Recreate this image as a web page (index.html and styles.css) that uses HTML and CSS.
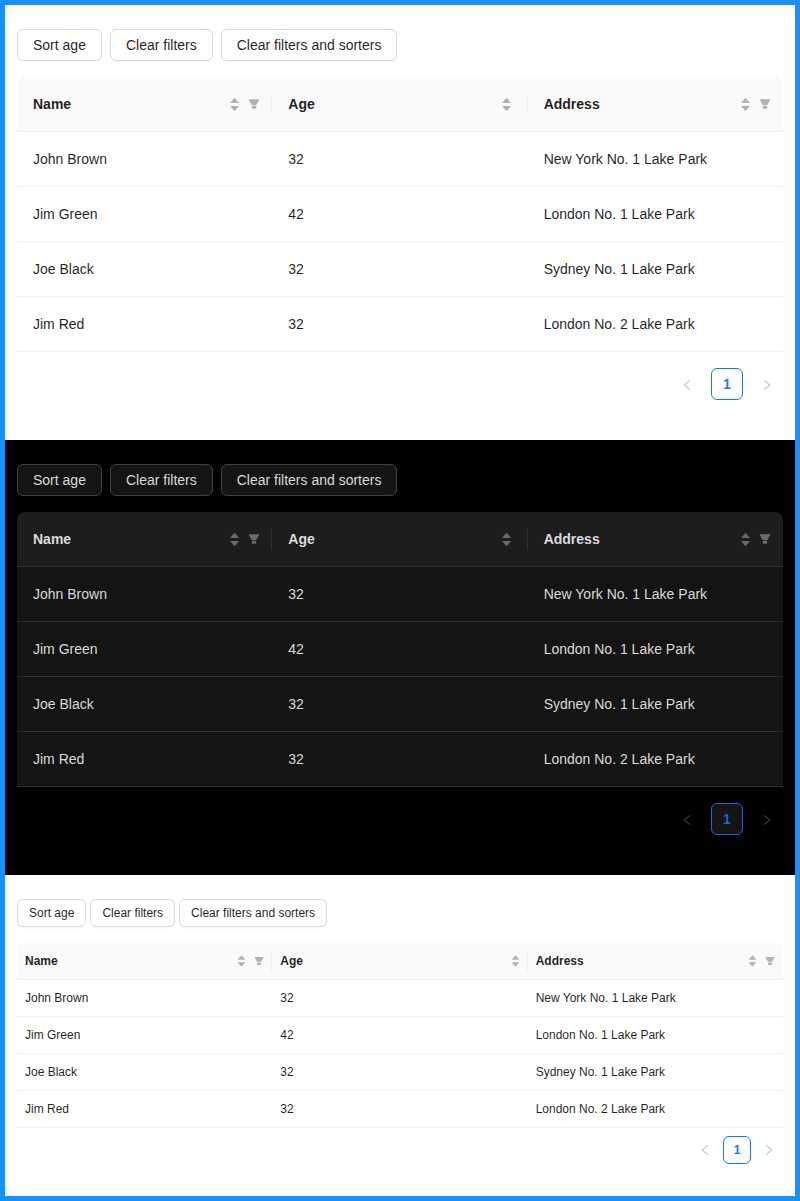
FILE: index.html
```html
<!DOCTYPE html>
<html lang="en">
<head>
    <meta charset="UTF-8">
    <meta name="viewport" content="width=device-width, initial-scale=1.0">
    <title>Table filters and sorters</title>
    <link rel="stylesheet" href="styles.css">
</head>
<body>
    <svg class="icon-defs" aria-hidden="true">
        <symbol id="caret-up" viewBox="64 64 896 896"><path d="M858.9 689L530.5 308.2c-9.4-10.9-27.5-10.9-37 0L165.1 689c-12.2 14.2-1.2 35 18.5 35h656.8c19.7 0 30.7-20.8 18.5-35z"/></symbol>
        <symbol id="caret-down" viewBox="64 64 896 896"><path d="M840.4 300H183.6c-19.7 0-30.7 20.8-18.5 35l328.4 380.8c9.4 10.9 27.5 10.9 37 0L858.9 335c12.2-14.2 1.2-35-18.5-35z"/></symbol>
        <symbol id="filter" viewBox="64 64 896 896"><path d="M349 838c0 17.7 14.2 32 31.7 32h262.6c17.5 0 31.7-14.3 31.7-32V642H349v196zm531.1-684H143.9c-24.5 0-39.8 26.7-27.5 48l221.3 376h348.8l221.3-376c12.1-21.3-3.2-48-27.7-48z"/></symbol>
        <symbol id="left" viewBox="64 64 896 896"><path d="M724 218.3V141c0-6.7-7.7-10.4-12.9-6.3L260.3 486.8a31.86 31.86 0 0 0 0 50.3l450.8 352.1c5.3 4.1 12.9.4 12.9-6.3v-77.3c0-4.9-2.3-9.6-6.1-12.6l-360-281 360-281.1c3.8-3 6.1-7.7 6.1-12.6z"/></symbol>
        <symbol id="right" viewBox="64 64 896 896"><path d="M765.7 486.8L314.9 134.7A7.97 7.97 0 0 0 302 141v77.3c0 4.9 2.3 9.6 6.1 12.6l360 281.1-360 281.1c-3.9 3-6.1 7.7-6.1 12.6V883c0 6.7 7.7 10.4 12.9 6.3l450.8-352.1a31.96 31.96 0 0 0 0-50.4z"/></symbol>
    </svg>

    <div class="frame">
        <!-- default, light -->
        <section class="demo">
            <div class="actions">
                <button class="btn">Sort age</button>
                <button class="btn">Clear filters</button>
                <button class="btn">Clear filters and sorters</button>
            </div>
            <table class="data-table">
                <thead>
                    <tr>
                        <th>
                            <div class="th-inner">
                                <span class="th-title">Name</span>
                                <span class="sorter"><svg><use href="#caret-up"/></svg><svg><use href="#caret-down"/></svg></span>
                                <span class="filter-trigger"><svg><use href="#filter"/></svg></span>
                            </div>
                        </th>
                        <th>
                            <div class="th-inner">
                                <span class="th-title">Age</span>
                                <span class="sorter"><svg><use href="#caret-up"/></svg><svg><use href="#caret-down"/></svg></span>
                            </div>
                        </th>
                        <th>
                            <div class="th-inner">
                                <span class="th-title">Address</span>
                                <span class="sorter"><svg><use href="#caret-up"/></svg><svg><use href="#caret-down"/></svg></span>
                                <span class="filter-trigger"><svg><use href="#filter"/></svg></span>
                            </div>
                        </th>
                    </tr>
                </thead>
                <tbody>
                    <tr><td>John Brown</td><td>32</td><td>New York No. 1 Lake Park</td></tr>
                    <tr><td>Jim Green</td><td>42</td><td>London No. 1 Lake Park</td></tr>
                    <tr><td>Joe Black</td><td>32</td><td>Sydney No. 1 Lake Park</td></tr>
                    <tr><td>Jim Red</td><td>32</td><td>London No. 2 Lake Park</td></tr>
                </tbody>
            </table>
            <ul class="pagination">
                <li class="page-arrow"><svg><use href="#left"/></svg></li>
                <li class="page-item">1</li>
                <li class="page-arrow"><svg><use href="#right"/></svg></li>
            </ul>
        </section>

        <!-- dark -->
        <section class="demo dark">
            <div class="actions">
                <button class="btn">Sort age</button>
                <button class="btn">Clear filters</button>
                <button class="btn">Clear filters and sorters</button>
            </div>
            <table class="data-table">
                <thead>
                    <tr>
                        <th>
                            <div class="th-inner">
                                <span class="th-title">Name</span>
                                <span class="sorter"><svg><use href="#caret-up"/></svg><svg><use href="#caret-down"/></svg></span>
                                <span class="filter-trigger"><svg><use href="#filter"/></svg></span>
                            </div>
                        </th>
                        <th>
                            <div class="th-inner">
                                <span class="th-title">Age</span>
                                <span class="sorter"><svg><use href="#caret-up"/></svg><svg><use href="#caret-down"/></svg></span>
                            </div>
                        </th>
                        <th>
                            <div class="th-inner">
                                <span class="th-title">Address</span>
                                <span class="sorter"><svg><use href="#caret-up"/></svg><svg><use href="#caret-down"/></svg></span>
                                <span class="filter-trigger"><svg><use href="#filter"/></svg></span>
                            </div>
                        </th>
                    </tr>
                </thead>
                <tbody>
                    <tr><td>John Brown</td><td>32</td><td>New York No. 1 Lake Park</td></tr>
                    <tr><td>Jim Green</td><td>42</td><td>London No. 1 Lake Park</td></tr>
                    <tr><td>Joe Black</td><td>32</td><td>Sydney No. 1 Lake Park</td></tr>
                    <tr><td>Jim Red</td><td>32</td><td>London No. 2 Lake Park</td></tr>
                </tbody>
            </table>
            <ul class="pagination">
                <li class="page-arrow"><svg><use href="#left"/></svg></li>
                <li class="page-item">1</li>
                <li class="page-arrow"><svg><use href="#right"/></svg></li>
            </ul>
        </section>

        <!-- compact -->
        <section class="demo small">
            <div class="actions">
                <button class="btn">Sort age</button>
                <button class="btn">Clear filters</button>
                <button class="btn">Clear filters and sorters</button>
            </div>
            <table class="data-table">
                <thead>
                    <tr>
                        <th>
                            <div class="th-inner">
                                <span class="th-title">Name</span>
                                <span class="sorter"><svg><use href="#caret-up"/></svg><svg><use href="#caret-down"/></svg></span>
                                <span class="filter-trigger"><svg><use href="#filter"/></svg></span>
                            </div>
                        </th>
                        <th>
                            <div class="th-inner">
                                <span class="th-title">Age</span>
                                <span class="sorter"><svg><use href="#caret-up"/></svg><svg><use href="#caret-down"/></svg></span>
                            </div>
                        </th>
                        <th>
                            <div class="th-inner">
                                <span class="th-title">Address</span>
                                <span class="sorter"><svg><use href="#caret-up"/></svg><svg><use href="#caret-down"/></svg></span>
                                <span class="filter-trigger"><svg><use href="#filter"/></svg></span>
                            </div>
                        </th>
                    </tr>
                </thead>
                <tbody>
                    <tr><td>John Brown</td><td>32</td><td>New York No. 1 Lake Park</td></tr>
                    <tr><td>Jim Green</td><td>42</td><td>London No. 1 Lake Park</td></tr>
                    <tr><td>Joe Black</td><td>32</td><td>Sydney No. 1 Lake Park</td></tr>
                    <tr><td>Jim Red</td><td>32</td><td>London No. 2 Lake Park</td></tr>
                </tbody>
            </table>
            <ul class="pagination">
                <li class="page-arrow"><svg><use href="#left"/></svg></li>
                <li class="page-item">1</li>
                <li class="page-arrow"><svg><use href="#right"/></svg></li>
            </ul>
        </section>
    </div>
</body>
</html>
```

FILE: styles.css
```css
* {
    box-sizing: border-box;
}
body {
    margin: 0;
    font-family: "Liberation Sans", Arial, sans-serif;
    font-size: 14px;
    line-height: 22px;
    color: rgba(0, 0, 0, 0.88);
}
.icon-defs {
    display: none;
}
.frame {
    border: 5px solid #1890ff;
    background: #fff;
}

/* one demo block */
.demo {
    padding: 24px 12px;
}
.actions {
    display: flex;
    gap: 8px;
    margin-bottom: 16px;
}
.btn {
    height: 32px;
    padding: 0 15px;
    border: 1px solid #d9d9d9;
    border-radius: 6px;
    background: #fff;
    box-shadow: 0 2px 0 rgba(0, 0, 0, 0.02);
    color: inherit;
    font: inherit;
}

/* table */
.data-table {
    width: 100%;
    table-layout: fixed;
    border-collapse: separate;
    border-spacing: 0;
}
.data-table th,
.data-table td {
    padding: 16px;
    border-bottom: 1px solid #f0f0f0;
    text-align: left;
}
.data-table th {
    position: relative;
    background: #fafafa;
    font-weight: 700;
}
.data-table th:first-child {
    border-top-left-radius: 8px;
}
.data-table th:last-child {
    border-top-right-radius: 8px;
}
.data-table th:not(:last-child)::before {
    content: "";
    position: absolute;
    top: 50%;
    right: 0;
    width: 1px;
    height: 22px;
    margin-top: -11px;
    background: #f0f0f0;
}
.th-inner {
    display: flex;
    align-items: center;
}
.th-title {
    flex: 1;
}
.sorter {
    display: flex;
    flex-direction: column;
    color: rgba(0, 0, 0, 0.29);
}
.sorter svg {
    display: block;
    width: 11px;
    height: 11px;
    fill: currentColor;
}
.sorter svg + svg {
    margin-top: -3px;
}
.filter-trigger {
    display: flex;
    margin: -4px -8px -4px 4px;
    padding: 0 4px;
    color: rgba(0, 0, 0, 0.29);
}
.filter-trigger svg {
    display: block;
    width: 12px;
    height: 12px;
    fill: currentColor;
}

/* pagination */
.pagination {
    display: flex;
    justify-content: flex-end;
    gap: 8px;
    margin: 16px 0;
    padding: 0;
    list-style: none;
}
.page-arrow,
.page-item {
    display: flex;
    align-items: center;
    justify-content: center;
    width: 32px;
    height: 32px;
}
.page-arrow {
    padding-top: 2px;
    color: rgba(0, 0, 0, 0.25);
}
.page-arrow svg {
    width: 12px;
    height: 12px;
    fill: currentColor;
}
.page-item {
    border: 1px solid #1677ff;
    border-radius: 6px;
    background: #fff;
    color: #1677ff;
    font-weight: 700;
}

/* dark */
.dark {
    background: #000;
    color: rgba(255, 255, 255, 0.85);
}
.dark .btn {
    border-color: #424242;
    background: #141414;
    box-shadow: 0 2px 0 rgba(0, 0, 0, 0.02);
}
.dark .data-table td {
    background: #141414;
    border-bottom-color: #303030;
}
.dark .data-table th {
    background: #1d1d1d;
    border-bottom-color: #303030;
}
.dark .data-table th:not(:last-child)::before {
    background: #303030;
}
.dark .sorter,
.dark .filter-trigger {
    color: rgba(255, 255, 255, 0.35);
}
.dark .page-arrow {
    color: rgba(255, 255, 255, 0.25);
}
.dark .page-item {
    border-color: #1668dc;
    background: #141414;
    color: #1668dc;
}

/* compact */
.small {
    font-size: 12px;
    line-height: 20px;
}
.small .actions {
    gap: 4px;
}
.small .btn {
    height: 28px;
    padding: 0 11px;
}
.small .data-table th,
.small .data-table td {
    padding: 8px;
}
.small .sorter svg {
    width: 9px;
    height: 9px;
}
.small .sorter svg + svg {
    margin-top: -2px;
}
.small .filter-trigger {
    margin-right: -4px;
    margin-left: 4px;
}
.small .filter-trigger svg {
    width: 10px;
    height: 10px;
}
.small .pagination {
    gap: 4px;
    margin: 8px 0;
}
.small .page-arrow,
.small .page-item {
    width: 28px;
    height: 28px;
}
.small .page-arrow {
    padding-top: 0;
}
```
